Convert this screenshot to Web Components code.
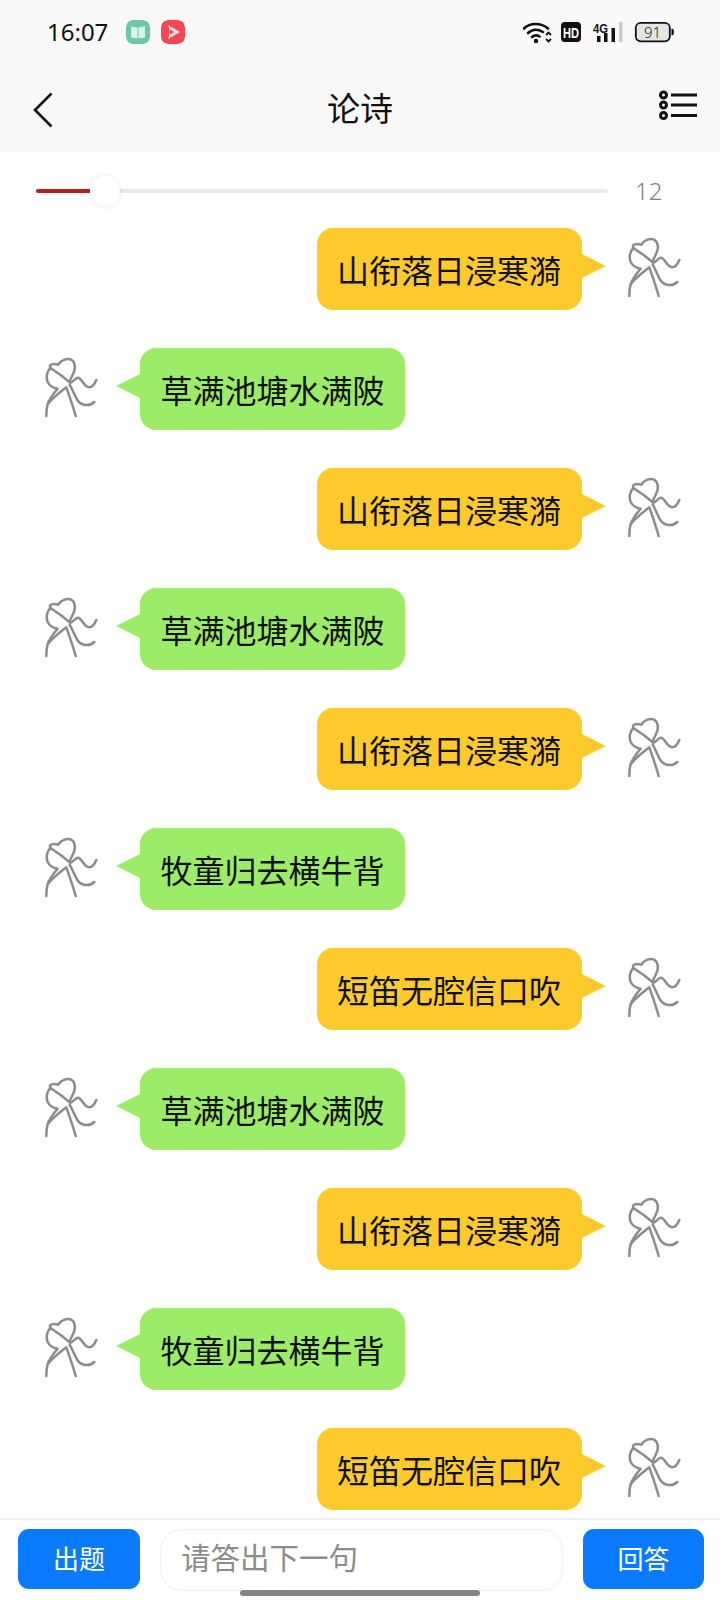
<!DOCTYPE html>
<html lang="zh"><head><meta charset="utf-8"><style>
html,body{margin:0;padding:0;background:#fff}
body{font-family:"Noto Sans CJK SC","Noto Sans",sans-serif;color:#111}
</style></head><body>
<poem-app>
<status-bar slot="top"></status-bar>
<nav-bar slot="top" title="论诗"></nav-bar>
<progress-row slot="top" value="12"></progress-row>
<chat-bubble side="right">山衔落日浸寒漪</chat-bubble>
<chat-bubble side="left">草满池塘水满陂</chat-bubble>
<chat-bubble side="right">山衔落日浸寒漪</chat-bubble>
<chat-bubble side="left">草满池塘水满陂</chat-bubble>
<chat-bubble side="right">山衔落日浸寒漪</chat-bubble>
<chat-bubble side="left">牧童归去横牛背</chat-bubble>
<chat-bubble side="right">短笛无腔信口吹</chat-bubble>
<chat-bubble side="left">草满池塘水满陂</chat-bubble>
<chat-bubble side="right">山衔落日浸寒漪</chat-bubble>
<chat-bubble side="left">牧童归去横牛背</chat-bubble>
<chat-bubble side="right">短笛无腔信口吹</chat-bubble>
<answer-bar slot="bottom"></answer-bar>
</poem-app>
<script>
function def(name, html, init){
  customElements.define(name, class extends HTMLElement{
    constructor(){super();this.attachShadow({mode:'open'}).innerHTML=html;}
    connectedCallback(){ if(init) init(this); }
  });
}
def('poem-app',`<style>
:host{display:flex;flex-direction:column;width:720px;height:1600px;overflow:hidden;background:#fff;position:relative}
.list{flex:1;min-height:0;overflow:hidden;display:flex;flex-direction:column;gap:37.500px}
</style><slot name="top"></slot><div class="list"><slot></slot></div><slot name="bottom"></slot>`);

def('status-bar',`<style>
:host{display:flex;align-items:center;height:64px;background:#f8f8f8;padding:0 45px 0 47px;box-sizing:border-box;color:#111}
.t{font:400 24px/1 "Noto Sans",sans-serif;width:79px}
.app{width:24px;height:24px;border-radius:7px;margin-right:11px;display:block}
.sp{flex:1}
svg{display:block}
</style>
<span class="t">16:07</span>
<svg class="app" viewBox="0 0 24 24"><rect width="24" height="24" rx="7" fill="#68c8a8"/><path d="M5 6.500l6.500 1v11L5 17.500zM12.500 7.500L19 6v11.500l-6.500 1z" fill="#d9f4ea"/></svg>
<svg class="app" viewBox="0 0 24 24"><rect width="24" height="24" rx="7" fill="#f5474f"/><path d="M7 5l12 7-12 7 2-7z" fill="#fde3e3"/><path d="M9 9.500l4 2.500-4 2.500z" fill="#f5474f"/></svg>
<span class="sp"></span>
<svg width="152" height="24" viewBox="0 0 152 24">
  <g fill="none" stroke="#111" stroke-width="2.600" stroke-linecap="round">
    <path d="M1 8.500C7 2.500 18 2.500 25 8.500"/><path d="M5 13c4.500-4 10-4 15-1"/><path d="M9 17c2.500-2 5-2 7.500-.5"/>
  </g>
  <circle cx="13" cy="21" r="2.200" fill="#111"/>
  <path d="M23 15l2.500-2.500 2.500 2.500M23 19l2.500 2.500 2.500-2.500" fill="none" stroke="#111" stroke-width="1.800"/>
  <rect x="38" y="2" width="20" height="20" rx="4" fill="#111"/>
  <text x="48" y="17.500" text-anchor="middle" fill="#fff" font-family="Liberation Sans" font-weight="700" font-size="14" textLength="16" lengthAdjust="spacingAndGlyphs">HD</text>
  <text x="70" y="13" fill="#111" font-family="Liberation Sans" font-weight="700" font-size="12" textLength="15" lengthAdjust="spacingAndGlyphs">4G</text>
  <rect x="74" y="16" width="3.500" height="6" fill="#111"/><rect x="81" y="13" width="3.500" height="9" fill="#111"/>
  <rect x="88.500" y="8" width="3.500" height="14" fill="#111"/><rect x="96" y="2" width="3.500" height="20" fill="#ccc"/>
  <rect x="112.800" y="2.800" width="34" height="18.500" rx="5" fill="#e4e4e4" stroke="#111" stroke-width="1.800"/>
  <path d="M148.500 8.500a2.500 3.500 0 0 1 0 7z" fill="#111"/>
  <text x="129.500" y="18" text-anchor="middle" fill="#222" font-family="Noto Sans" font-weight="300" font-size="15">91</text>
</svg>`);

def('nav-bar',`<style>
:host{display:grid;grid-template-columns:1fr auto 1fr;align-items:center;height:88px;background:#f8f8f8;padding:0 22px 0 33px;box-sizing:border-box;color:#111}
.title{font-size:33px;line-height:1;margin:-1px 0 0 -11px}
svg{display:block}
</style>
<svg width="20" height="36" viewBox="0 0 20 36" style="margin-top:3px"><path d="M18.500 1.500L2 18l16.500 16.500" fill="none" stroke="#111" stroke-width="2.600"/></svg>
<span class="title"></span>
<svg width="39" height="30" viewBox="0 0 39 30" style="margin-top:-6px;justify-self:end"><g fill="none" stroke="#111"><g stroke-width="3"><circle cx="4.500" cy="5" r="3"/><circle cx="4.500" cy="15" r="3"/><circle cx="4.500" cy="25.500" r="3"/></g><path d="M12 5h26M12 15h26M12 25.500h26" stroke-width="2.800"/></g></svg>
`, el=>{el.shadowRoot.querySelector('.title').textContent=el.getAttribute('title');});

def('progress-row',`<style>
:host{display:flex;align-items:center;height:75.500px;padding:0 0 0 36px;box-sizing:border-box;background:#fff}
.track{position:relative;width:572px;height:4px;border-radius:2px;background:#e9e9e9;margin-top:2px}
.fill{display:block;width:55px;height:4px;border-radius:2px;background:#b3201f}
.thumb{position:absolute;left:54px;top:-13px;width:30px;height:30px;border-radius:50%;background:#fff;box-shadow:0 0 6px rgba(0,0,0,.1)}
.v{margin-left:27px;font:300 24px/1 "Noto Sans",sans-serif;color:#808080;margin-top:2px}
</style>
<div class="track"><span class="fill"></span><span class="thumb"></span></div><span class="v"></span>
`, el=>{el.shadowRoot.querySelector('.v').textContent=el.getAttribute('value');});

const avatar=`<svg class="a" width="62" height="70" viewBox="0 0 186 210"><g fill="none" stroke="#8c8c8c" stroke-width="7.500" stroke-linecap="round" stroke-linejoin="round">
<path d="M28 48C22 36 38 34 52 38C60 24 80 16 92 24C104 32 104 52 96 66C92 74 88 82 86 90"/>
<path d="M28 48L60 70L88 92C96 92 104 74 114 78C124 84 130 104 144 106C156 106 162 94 166 84"/>
<path d="M28 48C18 58 14 76 20 90C26 102 38 108 50 110C38 124 24 140 19 160C16 172 16 182 16 192"/>
<path d="M21 156C34 138 58 120 76 106C86 134 96 162 104 192"/>
<path d="M86 98C94 112 100 128 108 142C118 162 146 164 160 150"/>
</g></svg>`;
def('chat-bubble',`<style>
:host{display:flex;align-items:center;height:82.500px;flex:none;box-sizing:border-box;padding:0 34px 0 41px}
:host([side=right]){justify-content:flex-end}
:host([side=right]) .a{order:3;margin-left:42.500px}
:host([side=left]) .a{margin-right:37px}
.a{margin-top:-4px;flex:none}
.b{position:relative;width:265px;height:82.500px;border-radius:16px;display:flex;align-items:center;justify-content:center;font-size:32px;line-height:1;color:#111}
:host([side=right]) .b{background:#fdca2e}
:host([side=left]) .b{background:#9dec67}
.b::after{content:"";position:absolute;top:26px;border:12px solid transparent}
:host([side=right]) .b::after{left:100%;border-left:24px solid #fdca2e;border-right:0}
:host([side=left]) .b::after{right:100%;border-right:24px solid #9dec67;border-left:0}
</style>${avatar}<div class="b"><slot></slot></div>`);

def('answer-bar',`<style>
:host{display:flex;align-items:flex-start;gap:20px;position:relative;height:82px;box-sizing:border-box;border-top:2px solid #efefef;padding:9px 16px 0 18px;background:#fff}
.btn{flex:none;width:122px;height:60px;border-radius:11px;background:#0a7bff;color:#fff;font-size:26px;display:flex;align-items:center;justify-content:center;line-height:1;padding-bottom:2px;box-sizing:border-box}
.btn.r{width:121px}
.input{flex:1;height:62px;border:1px solid #f0f0f0;border-radius:22px;box-sizing:border-box;color:#8c8c8c;font-size:29.500px;line-height:1;display:flex;align-items:center;padding-left:20px;padding-bottom:7px;white-space:nowrap}
.home{position:absolute;left:240px;bottom:4px;width:240px;height:6px;border-radius:3px;background:#858585}
</style><div class="btn">出题</div><div class="input">请答出下一句</div><div class="btn r">回答</div><div class="home"></div>`);
</script>
</body></html>
